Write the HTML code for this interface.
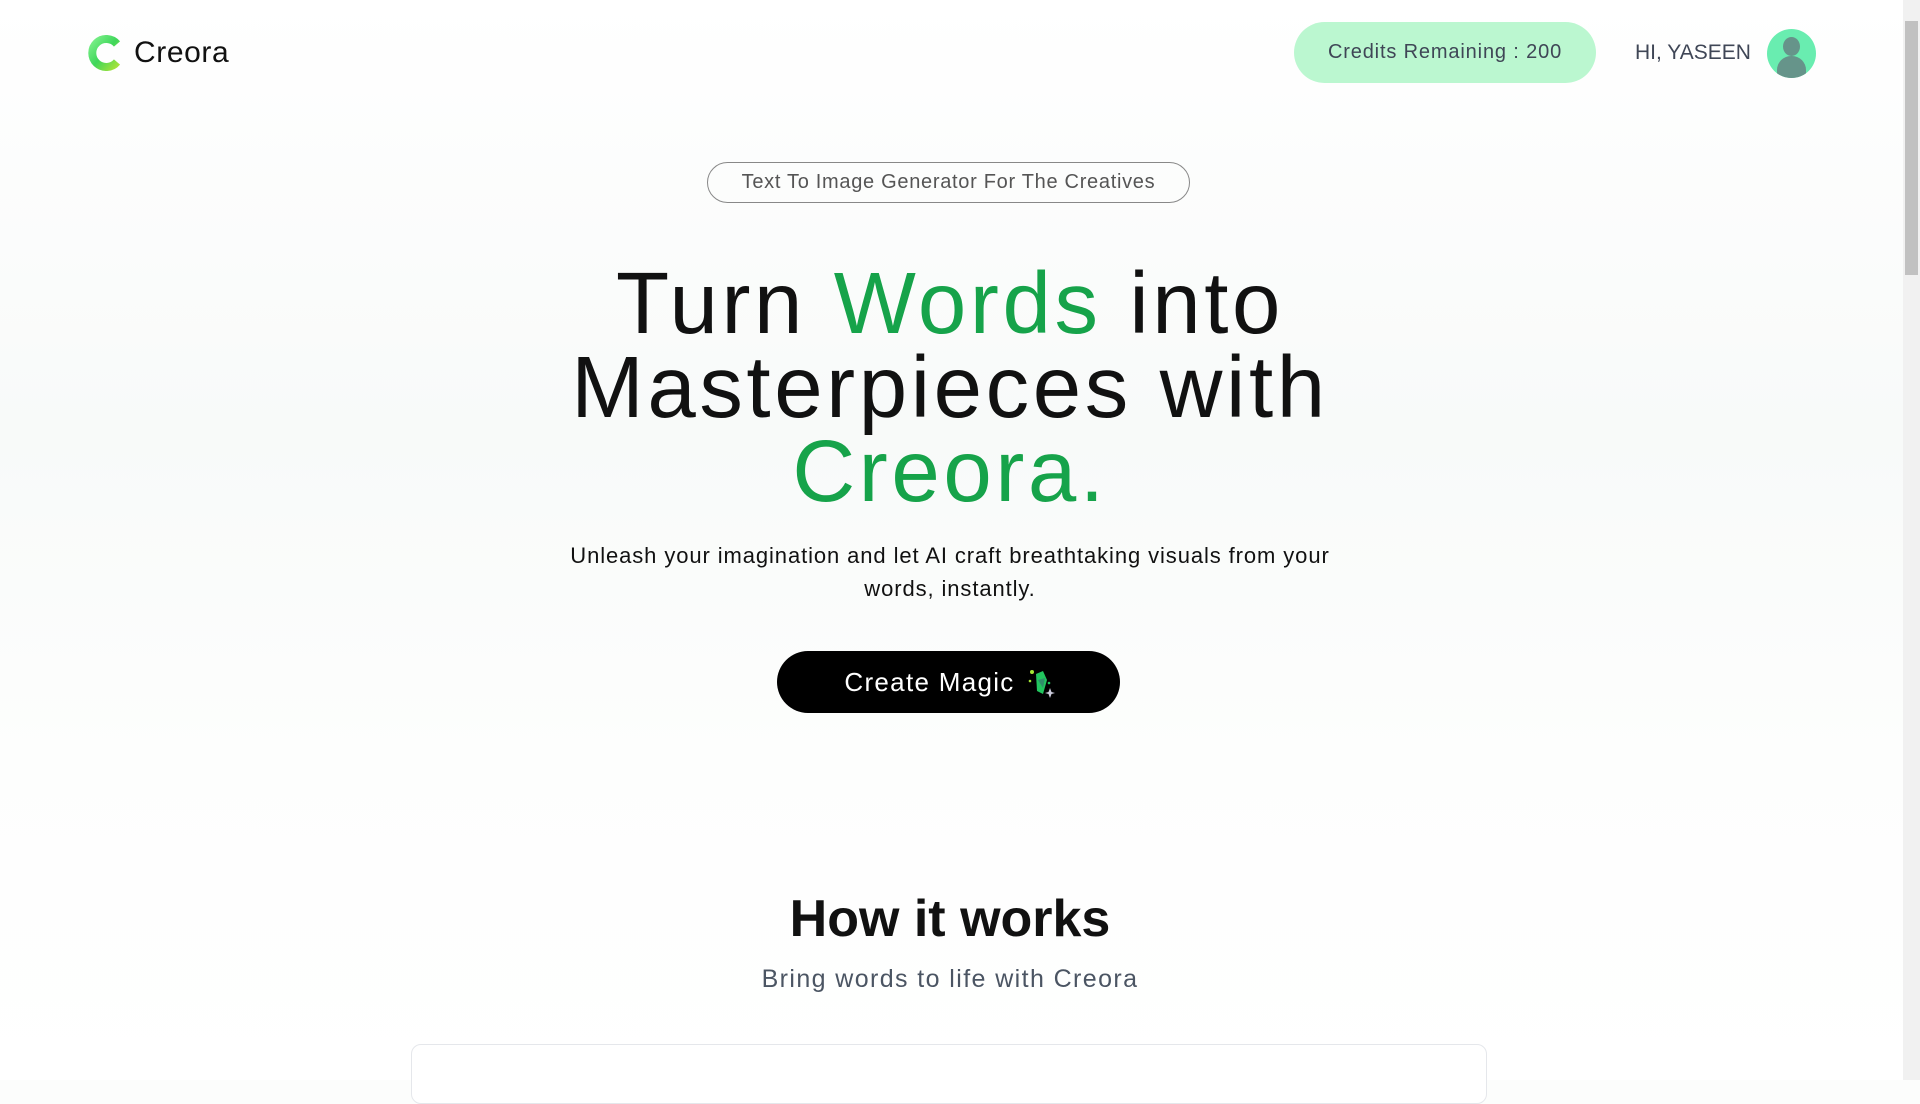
<!DOCTYPE html>
<html><head><meta charset="utf-8"><style>
*{margin:0;padding:0;box-sizing:border-box}
html,body{width:1920px;height:1080px;overflow:hidden;background:#fcfdfc;font-family:"Liberation Sans",sans-serif}
.page{position:absolute;left:0;top:0;width:1903px;height:1080px;background:linear-gradient(180deg,#fff 0%,#f8faf9 40%,#fdfefd 70%,#fff 100%)}
.abs{position:absolute}
.sb{position:absolute;right:0;top:0;width:17px;height:1080px;background:#f1f1f1}
.thumb{position:absolute;left:2px;top:21px;width:13px;height:254px;background:#c1c1c1}
.c{position:absolute;left:0;width:1900px;text-align:center}
</style></head><body>
<div class="page">
  <svg class="abs" style="left:88px;top:35px" width="36" height="36" viewBox="0 0 36 36">
    <defs><linearGradient id="g" x1="0" y1="0" x2="1" y2="1"><stop offset="0" stop-color="#7cf08a"/><stop offset=".5" stop-color="#3fd65a"/><stop offset="1" stop-color="#a6e23a"/></linearGradient></defs>
    <path d="M29 9 A14 14 0 1 0 29 27" fill="none" stroke="url(#g)" stroke-width="8"/>
  </svg>
  <div class="abs" style="left:134px;top:36px;font-size:30px;letter-spacing:0.6px;color:#111">Creora</div>
  <div class="abs" style="left:1294px;top:22px;width:302px;height:61px;border-radius:31px;background:#bbf7d0;color:#3f4656;font-size:20px;letter-spacing:0.85px;line-height:61px;text-align:center">Credits Remaining : 200</div>
  <div class="abs" style="left:1635px;top:41px;font-size:21px;color:#3f4656">HI, YASEEN</div>
  <div class="abs" style="left:1767px;top:29px;width:49px;height:49px;border-radius:50%;background:#69edb0;overflow:hidden">
    <div class="abs" style="left:16px;top:8px;width:17px;height:19px;border-radius:50%;background:#66948a"></div>
    <div class="abs" style="left:10px;top:27px;width:29px;height:26px;border-radius:14px 14px 0 0;background:#66948a"></div>
  </div>
  <div class="abs" style="left:707px;top:162px;width:483px;height:41px;border:1px solid #888;border-radius:21px;text-align:center;line-height:39px;font-size:20px;letter-spacing:0.7px;color:#555">Text To Image Generator For The Creatives</div>
  <div class="c" style="top:262px;font-size:87px;line-height:84px;letter-spacing:3.6px;color:#111">Turn <span style="color:#16a34a">Words</span> into<br>Masterpieces with<br><span style="color:#16a34a">Creora.</span></div>
  <div class="c" style="top:539px;font-size:22px;line-height:33px;letter-spacing:0.9px;color:#111"><div style="width:830px;margin:0 auto">Unleash your imagination and let AI craft breathtaking visuals from your words, instantly.</div></div>
  <div class="abs" style="left:777px;top:651px;width:343px;height:62px;border-radius:31px;background:#000;color:#fff;font-size:26px;letter-spacing:1.3px;line-height:62px;text-align:center;padding-right:38px">Create Magic</div>
  <svg class="abs" style="left:1023px;top:666px" width="34" height="34" viewBox="0 0 34 34">
    <path d="M13 8 L20 5 L24 14 L20 28 L14 25 Z" fill="#22c55e"/><path d="M15 14 L22 12 L20 22Z" fill="#2f8f6a"/>
    <circle cx="9" cy="6" r="2" fill="#a3e635"/><circle cx="7" cy="15" r="1.3" fill="#a3e635"/><circle cx="26" cy="17" r="1.3" fill="#22c55e"/>
    <path d="M27 22 L28.5 26 L32 27 L28.5 28 L27 32 L25.5 28 L22 27 L25.5 26Z" fill="#ccd"/>
  </svg>
  <div class="c" style="top:889px;font-size:52px;font-weight:bold;color:#111">How it works</div>
  <div class="c" style="top:965px;font-size:25px;letter-spacing:1.4px;color:#4b5563">Bring words to life with Creora</div>
  <div class="abs" style="left:411px;top:1044px;width:1076px;height:60px;border:1px solid #e5e7eb;border-radius:10px;background:#fff"></div>
</div>
<div class="sb"><div class="thumb"></div></div>
</body></html>
